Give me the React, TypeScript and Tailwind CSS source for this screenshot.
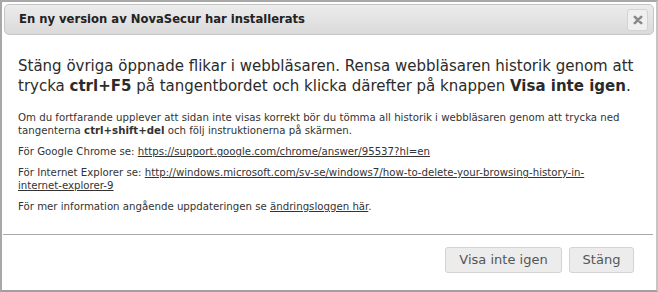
export default function App() {
  return (
    <div className="h-[292px] w-[658px] bg-white font-['DejaVu_Sans',Verdana,sans-serif] text-[#333]">
      <div className="flex h-[292px] flex-col border-2 border-[#a8a8a8] border-r-[#c4c4c4] border-b-[#a0a0a0] bg-white px-[1px] pt-[2px]">
        {/* Title bar */}
        <div className="ml-[1px] mr-[1px] flex h-[31px] shrink-0 items-center justify-between rounded-[5px] border border-[#c5c5c5] bg-gradient-to-b from-[#ececec] to-[#dadada] pl-[14px] pr-[5px]">
          <span className="text-[11.6px] font-bold text-[#222]">En ny version av NovaSecur har installerats</span>
          <button className="flex h-[22px] w-[21px] items-center justify-center rounded-[3px] border border-[#d3d3d3] bg-[#f0f0f0]">
            <svg width="10" height="10" viewBox="0 0 10 10">
              <path d="M1.8 1.8 L8.2 8.2 M8.2 1.8 L1.8 8.2" stroke="#8a8a8a" strokeWidth="2.6" strokeLinecap="round" />
            </svg>
          </button>
        </div>

        {/* Body */}
        <div className="flex-1 px-[15px] pt-[21px]">
          <p className="text-[15px] leading-[20px] text-[#2b2b2b]">
            Stäng övriga öppnade flikar i webbläsaren. Rensa webbläsaren historik genom att trycka <b>ctrl+F5</b> på tangentbordet och klicka därefter på knappen <b>Visa inte igen</b>.
          </p>
          <div className="flex flex-col gap-[8px] pr-[12px] pt-[15px] text-[10.2px] leading-[13px]">
            <p>
              Om du fortfarande upplever att sidan inte visas korrekt bör du tömma all historik i webbläsaren genom att trycka ned tangenterna <b>ctrl+shift+del</b> och följ instruktionerna på skärmen.
            </p>
            <p>
              För Google Chrome se: <a className="underline">https://support.google.com/chrome/answer/95537?hl=en</a>
            </p>
            <p>
              För Internet Explorer se: <a className="underline">http://windows.microsoft.com/sv-se/windows7/how-to-delete-your-browsing-history-in-internet-explorer-9</a>
            </p>
            <p>
              För mer information angående uppdateringen se <a className="underline">ändringsloggen här</a>.
            </p>
          </div>
        </div>

        {/* Footer */}
        <div className="mr-[2px] flex h-[56px] shrink-0 items-start justify-end gap-[7px] border-t border-[#a9a9a9] pr-[19px] pt-[12px]">
          <button className="h-[26px] w-[117px] rounded-[3px] border border-[#d3d3d3] bg-[#ececec] text-[13px] text-[#555]">Visa inte igen</button>
          <button className="h-[26px] w-[65px] rounded-[3px] border border-[#d3d3d3] bg-[#ececec] text-[13px] text-[#555]">Stäng</button>
        </div>
      </div>
    </div>
  );
}
